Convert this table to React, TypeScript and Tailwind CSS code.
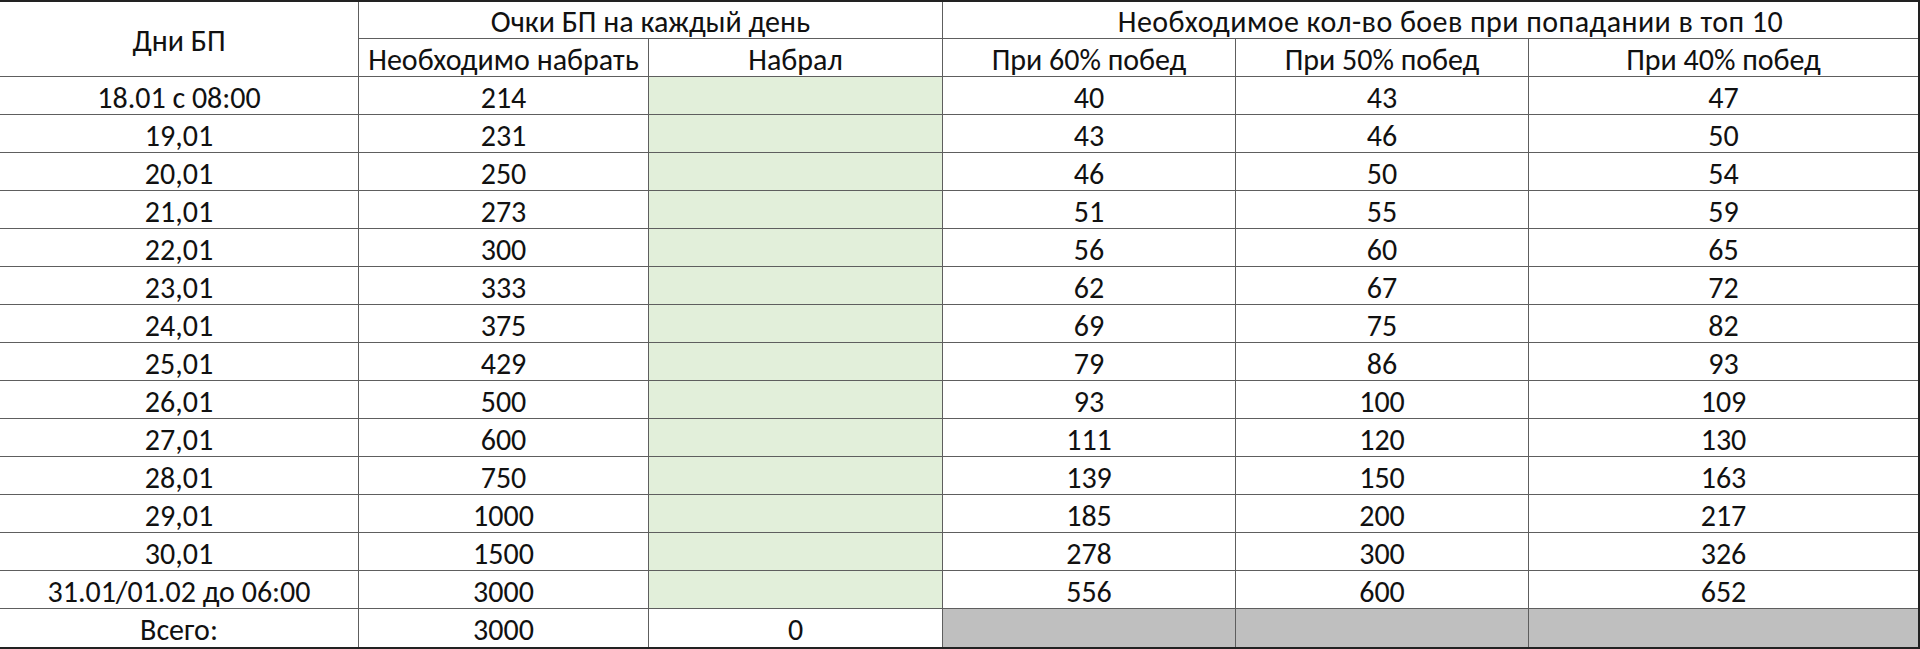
import React from "react";

const rows: [string, string, string, string, string][] = [
  ["18.01 с 08:00", "214", "40", "43", "47"],
  ["19,01", "231", "43", "46", "50"],
  ["20,01", "250", "46", "50", "54"],
  ["21,01", "273", "51", "55", "59"],
  ["22,01", "300", "56", "60", "65"],
  ["23,01", "333", "62", "67", "72"],
  ["24,01", "375", "69", "75", "82"],
  ["25,01", "429", "79", "86", "93"],
  ["26,01", "500", "93", "100", "109"],
  ["27,01", "600", "111", "120", "130"],
  ["28,01", "750", "139", "150", "163"],
  ["29,01", "1000", "185", "200", "217"],
  ["30,01", "1500", "278", "300", "326"],
  ["31.01/01.02 до 06:00", "3000", "556", "600", "652"],
];

const cell =
  "flex items-center justify-center pt-[4px] border-r border-b border-[#5e5e5e] whitespace-nowrap";
const lastCol =
  "flex items-center justify-center pt-[4px] border-b border-[#5e5e5e] whitespace-nowrap";

export default function App() {
  return (
    <div
      className="w-[1920px] h-[649px] bg-white border-t-2 border-r-2 border-b-2 border-[#222] text-[#111] text-[30px] leading-none"
      style={{ fontFamily: "Carlito, Calibri, 'Open Sans', sans-serif" }}
    >
      <div className="grid grid-cols-[359px_290px_294px_293px_293px_389px] grid-rows-[37px_repeat(16,38px)]">
        <div className={`${cell} row-span-2`}>Дни БП</div>
        <div className={`${cell} col-span-2`}>Очки БП на каждый день</div>
        <div className={`${lastCol} col-span-3 tracking-[0.45px] pl-[40px]`}>
          Необходимое кол-во боев при попадании в топ 10
        </div>
        <div className={cell}>Необходимо набрать</div>
        <div className={cell}>Набрал</div>
        <div className={cell}>При 60% побед</div>
        <div className={cell}>При 50% побед</div>
        <div className={lastCol}>При 40% побед</div>
        {rows.map((r) => (
          <React.Fragment key={r[0]}>
            <div className={cell}>{r[0]}</div>
            <div className={cell}>{r[1]}</div>
            <div className={`${cell} bg-[#e2efda]`}></div>
            <div className={cell}>{r[2]}</div>
            <div className={cell}>{r[3]}</div>
            <div className={lastCol}>{r[4]}</div>
          </React.Fragment>
        ))}
        <div className="flex items-center justify-center pt-[4px] border-r border-[#5e5e5e]">Всего:</div>
        <div className="flex items-center justify-center pt-[4px] border-r border-[#5e5e5e]">3000</div>
        <div className="flex items-center justify-center pt-[4px] border-r border-[#5e5e5e]">0</div>
        <div className="bg-[#bfbfbf] border-r border-[#5e5e5e]"></div>
        <div className="bg-[#bfbfbf] border-r border-[#5e5e5e]"></div>
        <div className="bg-[#bfbfbf]"></div>
      </div>
    </div>
  );
}
